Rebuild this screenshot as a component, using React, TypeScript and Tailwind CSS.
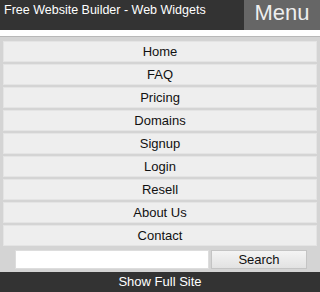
import React from "react";

const items = ["Home", "FAQ", "Pricing", "Domains", "Signup", "Login", "Resell", "About Us", "Contact"];

export default function App() {
  return (
    <div className="w-[320px] h-[292px] overflow-hidden bg-white" style={{ fontFamily: '"Liberation Sans", Arial, sans-serif' }}>
      <div className="h-[30px] bg-[#333333] flex">
        <div className="flex-1 text-white text-[12.5px] leading-[30px] pl-[4px] -mt-[5px]">Free Website Builder - Web Widgets</div>
        <div className="w-[76px] bg-[#666666] text-[#eeeeee] text-[22px] leading-[26px] text-center">Menu</div>
      </div>
      <div className="h-[6px] bg-white" />
      <div className="border-t border-[#b8b8b8] bg-[#d4d4d4] h-[236px] pt-[4px] px-[3px]">
        <div className="flex flex-col gap-[2px]">
          {items.map((t) => (
            <div key={t} className="h-[21px] bg-[#eeeeee] border border-[#e4e4e4] text-[13px] leading-[20px] text-center text-[#111111]">
              {t}
            </div>
          ))}
        </div>
        <div className="flex mt-[4px] pl-[12px] gap-[2px]">
          <div className="w-[194px] h-[19px] bg-white border border-[#dddddd]" />
          <div className="w-[96px] h-[19px] bg-gradient-to-b from-[#f4f4f4] to-[#e2e2e2] border border-[#c4c4c4] text-[13px] leading-[17px] text-center text-[#111111]">Search</div>
        </div>
      </div>
      <div className="h-[20px] bg-[#333333] text-white text-[13px] leading-[20px] text-center">Show Full Site</div>
    </div>
  );
}
